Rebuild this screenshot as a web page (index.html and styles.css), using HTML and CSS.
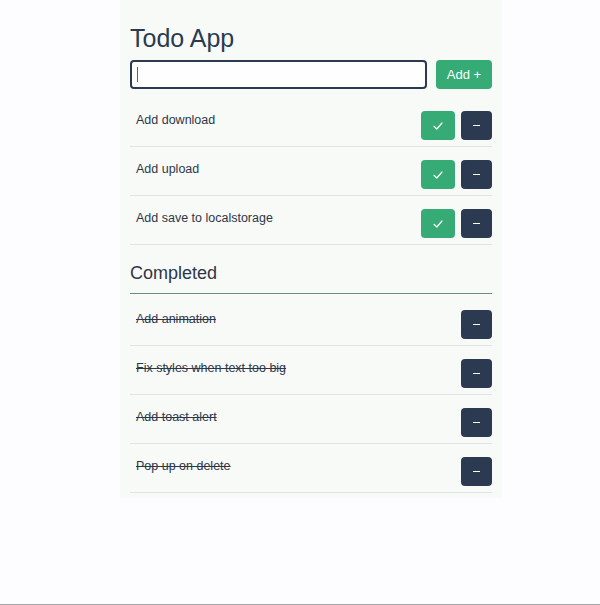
FILE: index.html
```html
<!DOCTYPE html>
<html lang="en">
<head>
<meta charset="utf-8">
<title>Todo App</title>
<link rel="stylesheet" href="styles.css">
</head>
<body>
<div class="page">
  <main class="app">
    <h1 class="title">Todo App</h1>
    <form class="add-form">
      <div class="input-wrap">
        <input class="todo-input" type="text" aria-label="New todo">
        <span class="caret"></span>
      </div>
      <button class="btn btn-add" type="button">Add +</button>
    </form>
    <ul class="list">
      <li class="row"><span class="row-text">Add download</span><div class="actions"><button class="btn btn-check" type="button"><svg width="10" height="8" viewBox="0 0 10 8"><path d="M1 4.3 L3.8 7 L9 1" fill="none" stroke="#fff" stroke-width="1.2" stroke-linecap="round" stroke-linejoin="round"/></svg></button><button class="btn btn-del" type="button"><span class="minus"></span></button></div></li>
      <li class="row"><span class="row-text">Add upload</span><div class="actions"><button class="btn btn-check" type="button"><svg width="10" height="8" viewBox="0 0 10 8"><path d="M1 4.3 L3.8 7 L9 1" fill="none" stroke="#fff" stroke-width="1.2" stroke-linecap="round" stroke-linejoin="round"/></svg></button><button class="btn btn-del" type="button"><span class="minus"></span></button></div></li>
      <li class="row"><span class="row-text">Add save to localstorage</span><div class="actions"><button class="btn btn-check" type="button"><svg width="10" height="8" viewBox="0 0 10 8"><path d="M1 4.3 L3.8 7 L9 1" fill="none" stroke="#fff" stroke-width="1.2" stroke-linecap="round" stroke-linejoin="round"/></svg></button><button class="btn btn-del" type="button"><span class="minus"></span></button></div></li>
    </ul>
    <h2 class="subtitle">Completed</h2>
    <ul class="list list-done">
      <li class="row"><span class="row-text done">Add animation</span><div class="actions"><button class="btn btn-del" type="button"><span class="minus"></span></button></div></li>
      <li class="row"><span class="row-text done">Fix styles when text too big</span><div class="actions"><button class="btn btn-del" type="button"><span class="minus"></span></button></div></li>
      <li class="row"><span class="row-text done">Add toast alert</span><div class="actions"><button class="btn btn-del" type="button"><span class="minus"></span></button></div></li>
      <li class="row"><span class="row-text done">Pop up on delete</span><div class="actions"><button class="btn btn-del" type="button"><span class="minus"></span></button></div></li>
    </ul>
  </main>
</div>
</body>
</html>
```

FILE: styles.css
```css
* { box-sizing: border-box; }
html, body { margin: 0; padding: 0; }
body {
  background: #fdfcfe;
  font-family: "Liberation Sans", Arial, sans-serif;
  color: #2d3748;
}
.page {
  height: 605px;
  border-bottom: 1px solid #a6a6a6;
}
.app {
  width: 382px;
  margin-left: 120px;
  padding: 23px 10px 5px;
  background: #f8faf8;
}
.title {
  margin: 0;
  font-size: 25px;
  line-height: 30px;
  font-weight: 400;
  color: #2a3a50;
}
.add-form {
  display: flex;
  gap: 9px;
  margin-top: 7px;
}
.input-wrap {
  position: relative;
  flex: 1;
  height: 29px;
}
.todo-input {
  width: 100%;
  height: 29px;
  border: 2px solid #2b3a51;
  border-radius: 4px;
  background: #fdfefd;
  outline: none;
  padding: 0 8px;
}
.caret {
  position: absolute;
  left: 7px;
  top: 7px;
  width: 1px;
  height: 15px;
  background: #5a6372;
}
.btn {
  border: none;
  border-radius: 4px;
  color: #fff;
  font-family: inherit;
  padding: 0;
  display: flex;
  align-items: center;
  justify-content: center;
  cursor: pointer;
}
.btn-add {
  width: 56px;
  height: 29px;
  background: #36ab76;
  font-size: 13px;
}
.list {
  list-style: none;
  margin: 9px 0 0;
  padding: 0;
}
.row {
  display: flex;
  justify-content: space-between;
  align-items: flex-start;
  padding: 13px 0 6px 6px;
  border-bottom: 1px solid #e0e3e8;
}
.row-text {
  font-size: 12.5px;
  line-height: 16px;
  padding-top: 1px;
}
.done { text-decoration: line-through; }
.actions {
  display: flex;
  gap: 6px;
}
.btn-check {
  width: 34px;
  height: 29px;
  background: #36ab76;
}
.btn-del {
  width: 31px;
  height: 29px;
  background: #2b3a51;
}
.minus {
  display: block;
  width: 7px;
  height: 1.5px;
  background: #fff;
}
.subtitle {
  margin: 17px 0 0;
  font-size: 18px;
  line-height: 22px;
  font-weight: 400;
  padding-bottom: 9px;
  border-bottom: 1px solid #6b8f80;
}
.list-done { margin-top: 3px; }
```
